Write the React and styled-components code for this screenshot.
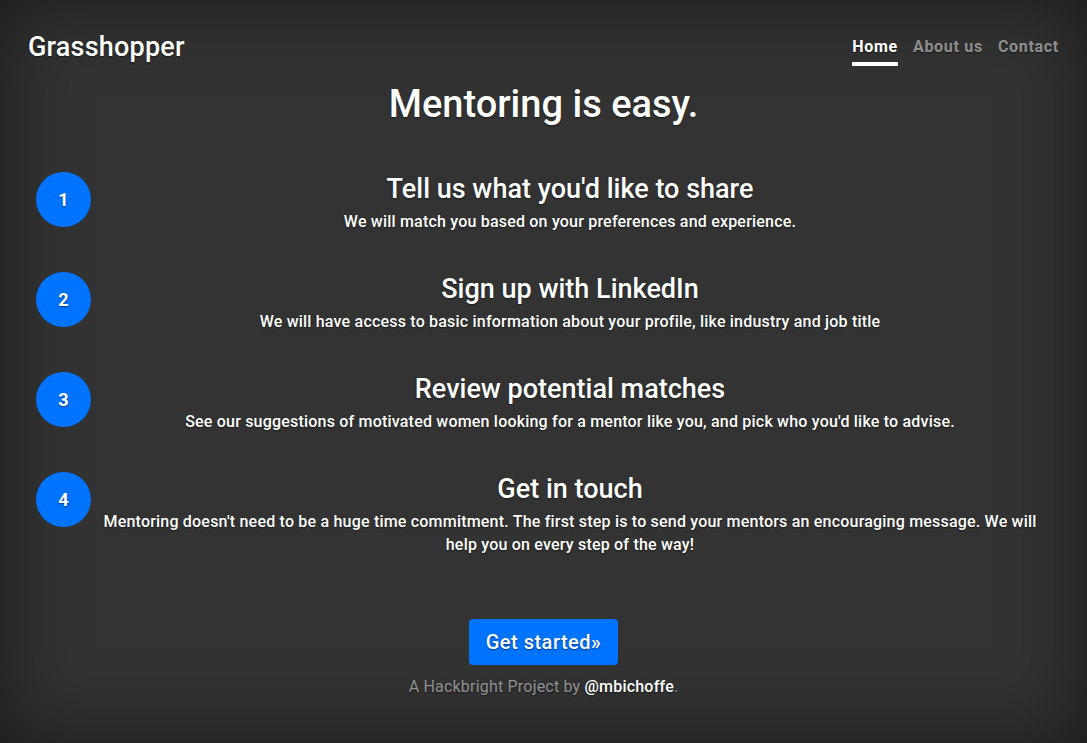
import React from "react";
import styled, { createGlobalStyle } from "styled-components";

const GlobalStyle = createGlobalStyle`
  html, body {
    margin: 0;
    height: 100%;
    background-color: #333;
  }
  body {
    color: #fff;
    font-family: Roboto, "Noto Sans", sans-serif;
    text-shadow: 0 0.05rem 0.1rem rgba(0, 0, 0, 0.5);
    box-shadow: inset 0 0 5rem rgba(0, 0, 0, 0.5);
    min-height: 743px;
  }
`;

const Cover = styled.div`
  display: flex;
  flex-direction: column;
  min-height: 743px;
  padding: 0 28px;
  box-sizing: border-box;
`;

const Header = styled.header`
  display: flex;
  justify-content: space-between;
  align-items: flex-start;
  padding-top: 31px;
`;

const Brand = styled.h3`
  margin: 0;
  font-size: 27px;
  font-weight: 500;
  line-height: 32px;
  letter-spacing: 0.2px;
`;

const Nav = styled.nav`
  display: flex;
  gap: 15px;
`;

const NavLink = styled.a`
  padding: 5px 0 4px;
  font-size: 16px;
  font-weight: 700;
  line-height: 22px;
  letter-spacing: 0.7px;
  color: ${(p) => (p.$active ? "#fff" : "rgba(255, 255, 255, 0.5)")};
  border-bottom: 4px solid ${(p) => (p.$active ? "#fff" : "transparent")};
  text-decoration: none;
`;

const Main = styled.main`
  display: flex;
  flex-direction: column;
`;

const Heading = styled.h1`
  margin: 14px 0 43px;
  text-align: center;
  font-size: 38px;
  font-weight: 500;
  line-height: 48px;
`;

const Steps = styled.div`
  display: flex;
  flex-direction: column;
  gap: 38px;
  padding: 0 19px 0 8px;
`;

const Step = styled.div`
  display: flex;
  align-items: flex-start;
  gap: 9px;
`;

const Circle = styled.div`
  flex: none;
  width: 55px;
  height: 55px;
  margin-top: 1px;
  border-radius: 50%;
  background: #0073ff;
  display: flex;
  align-items: center;
  justify-content: center;
  font-size: 18px;
  font-weight: 700;
`;

const StepBody = styled.div`
  flex: 1;
  text-align: center;
`;

const StepTitle = styled.h3`
  margin: 0 0 3px;
  font-size: 27px;
  font-weight: 500;
  line-height: 36px;
`;

const StepText = styled.p`
  margin: 0;
  font-size: 16px;
  font-weight: 500;
  line-height: 23px;
  letter-spacing: 0.2px;
`;

const Lead = styled.div`
  display: flex;
  justify-content: center;
  margin-top: 63px;
`;

const Button = styled.a`
  display: inline-block;
  padding: 8px 17px;
  font-size: 20px;
  font-weight: 500;
  line-height: 30px;
  letter-spacing: 0.5px;
  color: #fff;
  background: #0073ff;
  border-radius: 4px;
  text-decoration: none;
`;

const Footer = styled.footer`
  margin-top: 10px;
  text-align: center;
  font-size: 16px;
  line-height: 24px;
  letter-spacing: 0.2px;
  color: rgba(255, 255, 255, 0.5);
`;

const FooterLink = styled.a`
  color: #fff;
  font-weight: 500;
  text-decoration: none;
`;

const steps = [
  {
    title: "Tell us what you'd like to share",
    text: "We will match you based on your preferences and experience.",
  },
  {
    title: "Sign up with LinkedIn",
    text: "We will have access to basic information about your profile, like industry and job title",
  },
  {
    title: "Review potential matches",
    text: "See our suggestions of motivated women looking for a mentor like you, and pick who you'd like to advise.",
  },
  {
    title: "Get in touch",
    text: "Mentoring doesn't need to be a huge time commitment. The first step is to send your mentors an encouraging message. We will help you on every step of the way!",
  },
];

function App() {
  return (
    <>
      <GlobalStyle />
      <Cover>
        <Header>
          <Brand>Grasshopper</Brand>
          <Nav>
            <NavLink href="#" $active>
              Home
            </NavLink>
            <NavLink href="#">About us</NavLink>
            <NavLink href="#">Contact</NavLink>
          </Nav>
        </Header>
        <Main>
          <Heading>Mentoring is easy.</Heading>
          <Steps>
            {steps.map((s, i) => (
              <Step key={i}>
                <Circle>{i + 1}</Circle>
                <StepBody>
                  <StepTitle>{s.title}</StepTitle>
                  <StepText>{s.text}</StepText>
                </StepBody>
              </Step>
            ))}
          </Steps>
          <Lead>
            <Button href="#">Get started»</Button>
          </Lead>
        </Main>
        <Footer>
          A Hackbright Project by <FooterLink href="#">@mbichoffe</FooterLink>.
        </Footer>
      </Cover>
    </>
  );
}

export default App;
